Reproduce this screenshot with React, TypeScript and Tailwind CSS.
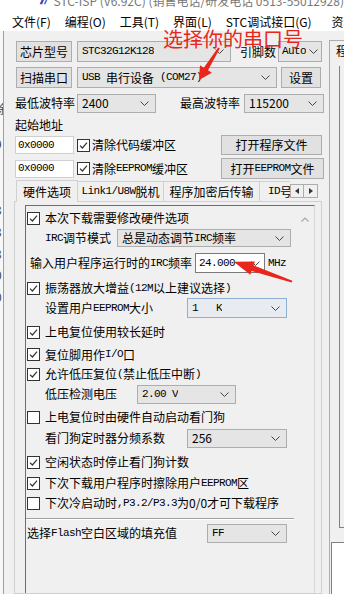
import React from "react";

const mono = "font-['Liberation_Mono',monospace] text-[11px] tracking-[-0.6px]";

// splits a label into ascii runs (drawn in a narrow mono face) and CJK runs
function Mix({ t }: { t: string }) {
  const parts = t.split(/([\x20-\x7e]+)/);
  return (
    <>
      {parts.map((p, i) =>
        i % 2 === 1 ? (
          <span key={i} className={mono + " whitespace-pre"}>{p}</span>
        ) : (
          <span key={i}>{p}</span>
        )
      )}
    </>
  );
}

const Chev = () => (
  <svg width="9" height="5" viewBox="0 0 9 5" className="shrink-0">
    <path d="M0.5 0.5 L4.5 4.5 L8.5 0.5" fill="none" stroke="#444" strokeWidth="1" />
  </svg>
);

const Check = ({ on = true }: { on?: boolean }) => (
  <span className="w-[13px] h-[13px] border border-[#333] bg-white flex items-center justify-center shrink-0">
    {on && (
      <svg width="9" height="9" viewBox="0 0 9 9">
        <path d="M1 4.6 L3.4 7 L8 1.6" fill="none" stroke="#333" strokeWidth="1.2" />
      </svg>
    )}
  </span>
);

type SelProps = { cls: string; children: React.ReactNode };
const Sel = ({ cls, children }: SelProps) => (
  <div className={"flex items-center justify-between border shrink-0 pl-[4px] pr-[6px] " + cls}>
    <span className="flex items-center whitespace-nowrap overflow-hidden">{children}</span>
    <Chev />
  </div>
);

const Btn = ({ cls, children }: SelProps) => (
  <div className={"flex items-center justify-center bg-[#e1e1e1] border border-[#adadad] shrink-0 whitespace-nowrap " + cls}>
    {children}
  </div>
);

const CheckRow = ({ cls, on = true, children }: { cls: string; on?: boolean; children: React.ReactNode }) => (
  <div className={"flex items-center whitespace-nowrap " + cls}>
    <span className="ml-[1px]"><Check on={on} /></span>
    <span className="ml-[5px] flex items-center">{children}</span>
  </div>
);

const App = () => {
  return (
    <div className="w-[344px] h-[594px] overflow-hidden bg-[#f0f0f0] flex flex-col relative font-['Noto_Sans_CJK_SC',sans-serif] text-[12px] text-black leading-none">
      {/* title bar, cut off at the top */}
      <div className="h-[9px] bg-white overflow-hidden shrink-0">
        <div className="-mt-[8px] h-[17px] flex items-center pl-[38px] gap-[4px] text-[12px] text-[#777] whitespace-nowrap">
          <svg width="14" height="12" viewBox="0 0 14 12">
            <path d="M2 10 L6 1 L9 1 L5 10 Z" fill="#5b3fa8" />
            <path d="M7 10 L11 1 L13 1 L9 10 Z" fill="#3f6fd0" />
          </svg>
          <span>STC-ISP (V6.92C) (销售电话/研发电话 0513-55012928)</span>
        </div>
      </div>

      {/* menu */}
      <div className="h-[22px] pt-[4px] bg-white flex items-center pl-[12px] gap-[14px] text-[12px] shrink-0 whitespace-nowrap">
        <span>文件(F)</span>
        <span>编程(O)</span>
        <span>工具(T)</span>
        <span>界面(L)</span>
        <span>STC调试接口(G)</span>
        <span className="ml-[6px]">资料</span>
      </div>

      <div className="flex flex-1 min-h-0">
        {/* window behind, left edge */}
        <div className="w-[12px] flex shrink-0">
          <div className="w-[3px] bg-[#f7f7f7] overflow-hidden">
            <div className="-ml-[5px] flex flex-col text-[12px] text-[#444] leading-[14px]">
              <span className="mt-[71px] h-[14px]">徐</span>
              <span className="mt-[21px] h-[14px]">9</span>
              <span className="mt-[52px] h-[14px]">3</span>
              <span className="mt-[8px] h-[14px]">3</span>
              <span className="mt-[8px] h-[14px]">3</span>
              <span className="mt-[7px] h-[14px]">0</span>
              <span className="mt-[8px] h-[14px]">0</span>
            </div>
          </div>
          <div className="w-[1px] bg-[#a0a0a0]" />
        </div>

        {/* main left pane */}
        <div className="w-[317px] flex flex-col shrink-0">
          <div className="mt-[10px] h-[21px] flex items-center pl-[4px]">
            <Btn cls="w-[56px] h-[21px]">芯片型号</Btn>
            <Sel cls="ml-[5px] w-[154px] h-[21px] bg-[#e5e5e5] border-[#adadad]">
              <span className={mono}>STC32G12K128</span>
            </Sel>
            <span className="ml-[9px] w-[36px] whitespace-nowrap">引脚数</span>
            <Sel cls="ml-[2px] w-[44px] h-[21px] bg-[#e5e5e5] border-[#adadad] !pl-[3px] !pr-[3px]">
              <span className={mono}>Auto</span>
            </Sel>
          </div>

          <div className="mt-[5px] h-[21px] flex items-center pl-[4px]">
            <Btn cls="w-[56px] h-[21px]">扫描串口</Btn>
            <Sel cls="ml-[5px] w-[200px] h-[21px] bg-[#e5e5e5] border-[#adadad]">
              <Mix t="USB 串行设备 (COM27)" />
            </Sel>
            <Btn cls="ml-[4px] w-[40px] h-[21px]">设置</Btn>
          </div>

          <div className="mt-[5px] h-[20px] flex items-center pl-[3px] whitespace-nowrap">
            <span className="w-[62px]">最低波特率</span>
            <Sel cls="w-[79px] h-[19px] bg-[#e5e5e5] border-[#adadad]">2400</Sel>
            <span className="ml-[24px] w-[64px]">最高波特率</span>
            <Sel cls="w-[80px] h-[19px] bg-[#e5e5e5] border-[#adadad]">115200</Sel>
          </div>

          <div className="mt-[3px] h-[17px] flex items-center pl-[3px]">起始地址</div>

          <div className="mt-[2px] h-[20px] flex items-center pl-[3px] whitespace-nowrap">
            <div className="w-[206px] flex items-center">
              <div className="w-[59px] h-[18px] bg-white border border-[#cfcfcf] flex items-center pl-[2px]">
                <span className={mono}>0x0000</span>
              </div>
              <span className="ml-[3px]"><Check /></span>
              <span className="ml-[2px]">清除代码缓冲区</span>
            </div>
            <Btn cls="w-[101px] h-[20px]">打开程序文件</Btn>
          </div>

          <div className="mt-[3px] h-[21px] flex items-center pl-[3px] whitespace-nowrap">
            <div className="w-[206px] flex items-center">
              <div className="w-[59px] h-[18px] bg-white border border-[#cfcfcf] flex items-center pl-[2px]">
                <span className={mono}>0x0000</span>
              </div>
              <span className="ml-[3px]"><Check /></span>
              <span className="ml-[2px] flex items-center"><Mix t="清除EEPROM缓冲区" /></span>
            </div>
            <Btn cls="w-[103px] h-[21px]"><Mix t="打开EEPROM文件" /></Btn>
          </div>

          {/* tabs */}
          <div className="h-[22px] flex items-end pl-[4px] whitespace-nowrap">
            <div className="w-[62px] h-[22px] border-t border-l border-r border-[#d0d0d0] bg-[#f0f0f0] flex items-center justify-center -mb-[1px] relative z-10">
              硬件选项
            </div>
            <div className="w-[86px] h-[20px] border-t border-r border-[#d0d0d0] flex items-center justify-center">
              <Mix t="Link1/U8W脱机" />
            </div>
            <div className="w-[96px] h-[20px] border-t border-r border-[#d0d0d0] flex items-center justify-center">
              程序加密后传输
            </div>
            <div className="w-[30px] h-[20px] border-t border-[#d0d0d0] flex items-center pl-[8px] overflow-hidden">
              <Mix t="ID号" />
            </div>
            <div className="h-[20px] flex items-center">
              <div className="w-[14px] h-[14px] border border-[#adadad] bg-[#f0f0f0] flex items-center justify-center">
                <svg width="4" height="6" viewBox="0 0 4 6"><path d="M4 0 L0 3 L4 6 Z" fill="#333" /></svg>
              </div>
              <div className="w-[14px] h-[14px] border border-[#adadad] border-l-0 bg-[#f0f0f0] flex items-center justify-center">
                <svg width="4" height="6" viewBox="0 0 4 6"><path d="M0 0 L4 3 L0 6 Z" fill="#333" /></svg>
              </div>
            </div>
          </div>

          {/* tab page */}
          <div className="ml-[2px] w-[308px] flex-1 min-h-0 border border-[#d0d0d0] flex flex-col">
            <div className="ml-[10px] mt-[3px] w-[290px] flex-1 min-h-0 border-t border-l border-[#6d6d6d] border-r border-r-[#d7d7d7] flex">
              <div className="flex-1 flex flex-col">
                <CheckRow cls="mt-[2px] h-[20px]">本次下载需要修改硬件选项</CheckRow>

                <div className="h-[20px] flex items-center whitespace-nowrap">
                  <span className="w-[91px] pl-[19px] flex items-center"><Mix t="IRC调节模式" /></span>
                  <Sel cls="w-[174px] h-[18px] bg-[#e5e5e5] border-[#adadad]">
                    <Mix t="总是动态调节IRC频率" />
                  </Sel>
                </div>

                <div className="mt-[4px] h-[22px] flex items-center whitespace-nowrap">
                  <span className="w-[169px] pl-[4px] flex items-center"><Mix t="输入用户程序运行时的IRC频率" /></span>
                  <div className="w-[70px] h-[20px] bg-white border border-[#7a7a7a] flex items-center justify-between pl-[3px] pr-[4px]">
                    <span className={mono}>24.000</span>
                    <Chev />
                  </div>
                  <span className={"ml-[3px] " + mono}>MHz</span>
                </div>

                <CheckRow cls="mt-[4px] h-[20px]"><Mix t="振荡器放大增益(12M以上建议选择)" /></CheckRow>

                <div className="h-[20px] flex items-center whitespace-nowrap">
                  <span className="w-[161px] pl-[19px] flex items-center"><Mix t="设置用户EEPROM大小" /></span>
                  <Sel cls="w-[100px] h-[20px] bg-[#e8ecf0] border-[#8fb0d6]">
                    <span className={mono + " whitespace-pre"}>1   K</span>
                  </Sel>
                </div>

                <CheckRow cls="mt-[4px] h-[20px]">上电复位使用较长延时</CheckRow>
                <CheckRow cls="mt-[3px] h-[19px]"><Mix t="复位脚用作I/O口" /></CheckRow>
                <CheckRow cls="h-[20px]"><Mix t="允许低压复位(禁止低压中断)" /></CheckRow>

                <div className="h-[20px] flex items-center whitespace-nowrap">
                  <span className="w-[111px] pl-[19px]">低压检测电压</span>
                  <Sel cls="w-[99px] h-[19px] bg-[#e5e5e5] border-[#adadad]">
                    <span className={mono + " whitespace-pre"}>2.00 V</span>
                  </Sel>
                </div>

                <CheckRow cls="mt-[3px] h-[20px]" on={false}>上电复位时由硬件自动启动看门狗</CheckRow>

                <div className="mt-[1px] h-[20px] flex items-center whitespace-nowrap">
                  <span className="w-[161px] pl-[19px]">看门狗定时器分频系数</span>
                  <Sel cls="w-[100px] h-[19px] bg-[#e5e5e5] border-[#adadad]">256</Sel>
                </div>

                <CheckRow cls="mt-[4px] h-[20px]">空闲状态时停止看门狗计数</CheckRow>
                <CheckRow cls="mt-[1px] h-[20px]"><Mix t="下次下载用户程序时擦除用户EEPROM区" /></CheckRow>
                <CheckRow cls="h-[20px]" on={false}>
                  <Mix t="下次冷启动时,P3.2/P3.3为" />
                  <span>0/0才可下载程序</span>
                </CheckRow>

                <div className="mt-[5px] w-[268px] h-[2px] border-t border-[#a0a0a0] border-b border-b-white" />

                <div className="mt-[3px] h-[20px] flex items-center whitespace-nowrap">
                  <span className="w-[181px] pl-[1px] flex items-center"><Mix t="选择Flash空白区域的填充值" /></span>
                  <Sel cls="w-[80px] h-[19px] bg-[#e5e5e5] border-[#adadad]">
                    <span className={mono}>FF</span>
                  </Sel>
                </div>
              </div>

              {/* vertical scrollbar */}
              <div className="w-[19px] flex flex-col items-center">
                <svg width="8" height="5" viewBox="0 0 8 5" className="mt-[11px]">
                  <path d="M0.5 4.5 L4 1 L7.5 4.5" fill="none" stroke="#a6a6a6" strokeWidth="1.2" />
                </svg>
              </div>
            </div>
          </div>
        </div>

        {/* right pane, cut off */}
        <div className="flex-1 flex flex-col pt-[9px] min-w-0">
          <div className="h-[20px] border-t border-l border-[#adadad] flex items-center pl-[6px] whitespace-nowrap overflow-hidden">
            程序文件
          </div>
          <div className="flex-1 border-l border-[#adadad] flex flex-col">
            <div className="ml-[9px] mt-[6px] h-[462px] border-l border-b border-[#828282]" />
            <div className="ml-[1px] mt-[14px] flex-1 border-l border-t border-[#828282] bg-white" />
          </div>
        </div>
      </div>

      {/* red annotations */}
      <div className="absolute left-[163px] top-[28px] text-[20px] text-[#e8261c] whitespace-nowrap leading-[22px]">
        选择你的串口号
      </div>
      <svg className="absolute inset-0 pointer-events-none" width="344" height="594" viewBox="0 0 344 594">
        <polygon
          points="219.8,48.5 208,70.3 211.8,72.7 199,80 200,65.3 203.8,67.7 218.2,47.5"
          fill="#e8261c"
        />
        <polygon
          points="292.3,280.8 253.6,265.4 254.9,261.6 233.7,261.7 250.3,274.8 251.6,271 291.7,282.6"
          fill="#e8261c"
        />
      </svg>
    </div>
  );
};

export default App;
